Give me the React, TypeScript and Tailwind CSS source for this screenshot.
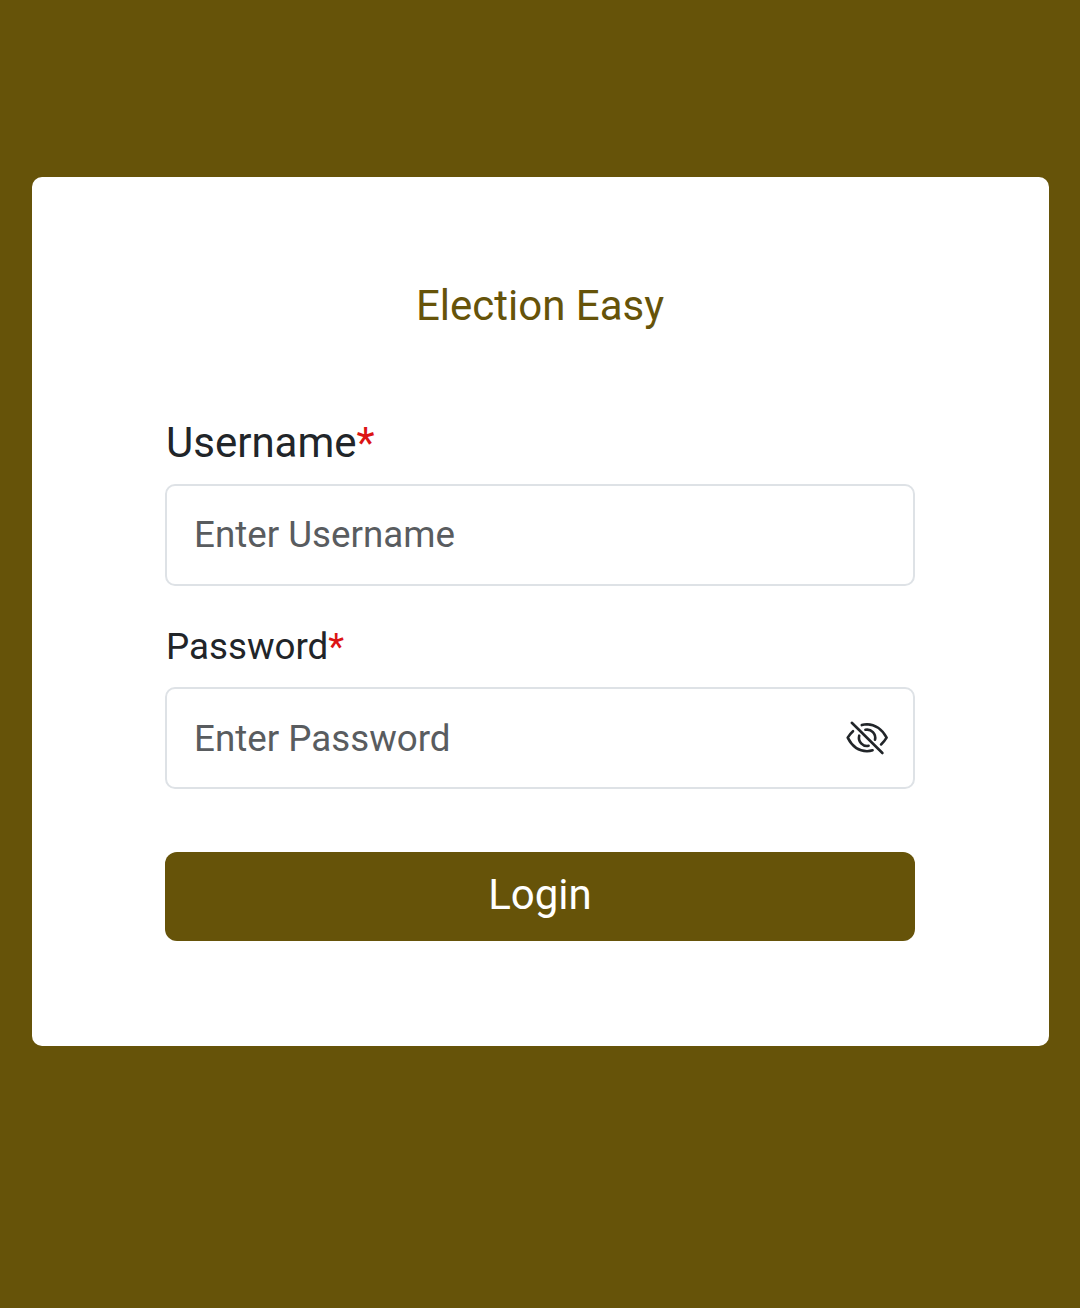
import React from "react";

function EyeSlashIcon() {
  return (
    <svg
      viewBox="0 0 42 42"
      className="size-[42px] shrink-0"
      fill="none"
      stroke="currentColor"
      strokeWidth="2.6"
      strokeLinecap="round"
      strokeLinejoin="round"
    >
      <path d="M5.8 5.8 36.4 36" />
      <path d="M7 14.2Q4 16.8 1.7 20.7Q8.5 34.2 21 34.2Q24 34.2 26.6 33.3" />
      <path d="M15.8 8.1Q18.3 7.3 21 7.3Q33.5 7.6 40.6 20.7Q38.3 24.6 35.1 27.4" />
      <path d="M19.4 12.8A8.2 8.2 0 0 1 29 22.7" />
      <path d="M13.2 18.7A8.2 8.2 0 0 0 22.6 28.8" />
    </svg>
  );
}

export default function App() {
  return (
    <main className="min-h-[1308px] bg-[#665309] px-8 pt-[177px] font-['Roboto',sans-serif] text-[#212529]">
      <form className="flex h-[869px] w-[1017px] flex-col rounded-[10px] bg-white pt-[104px] pr-[134px] pl-[133px]">
        <h1 className="text-center text-[42px] leading-[50px] text-[#665309]">Election Easy</h1>
        <label className="mt-20 pl-px text-[42px] leading-[63px]">
          Username<span className="text-[#dc1414]">*</span>
        </label>
        <input
          className="mt-[10px] h-[102px] rounded-[10px] border-2 border-[#dee2e6] px-[27px] pb-[2px] text-[36.75px] placeholder:text-[#595c5f]"
          placeholder="Enter Username"
        />
        <label className="mt-[33px] pl-px text-[36.75px] leading-[56px]">
          Password<span className="text-[#dc1414]">*</span>
        </label>
        <div className="mt-[12px] flex h-[102px] items-center rounded-[10px] border-2 border-[#dee2e6] pr-[25px] pl-[27px]">
          <input
            type="password"
            className="min-w-0 flex-1 pt-[2px] text-[36.75px] placeholder:text-[#595c5f]"
            placeholder="Enter Password"
          />
          <EyeSlashIcon />
        </div>
        <button type="button" className="mt-[63px] h-[89px] rounded-[12px] bg-[#665309] pb-1 text-[42px] text-white">
          Login
        </button>
      </form>
    </main>
  );
}
